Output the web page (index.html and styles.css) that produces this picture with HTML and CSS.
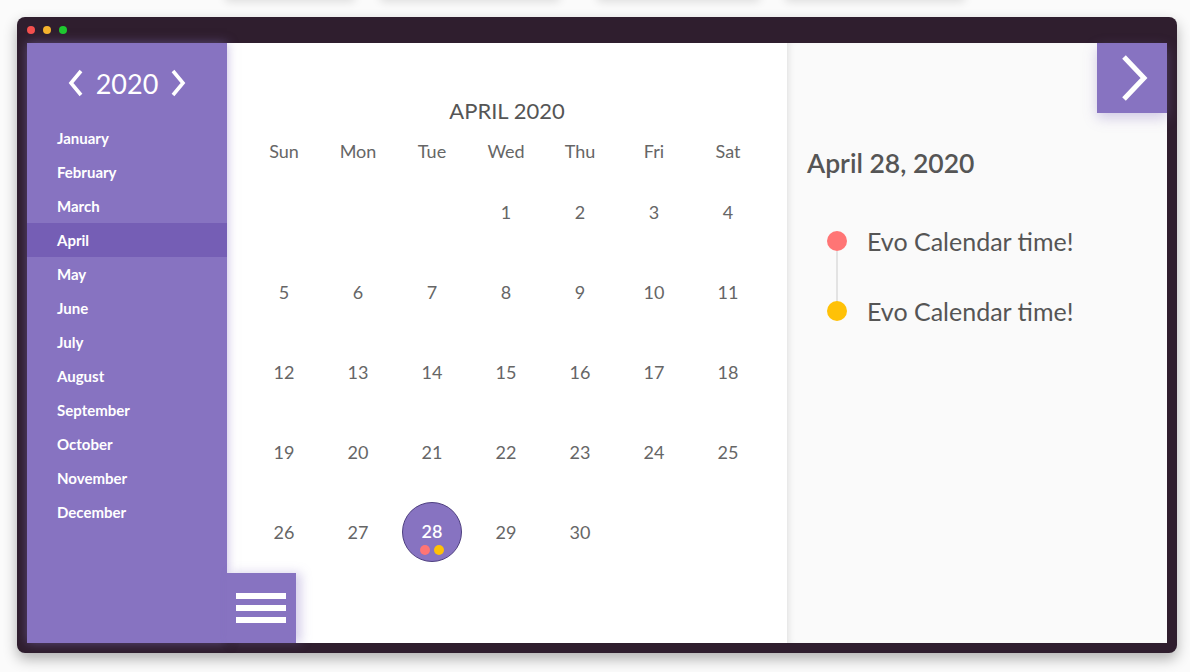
FILE: index.html
```html
<!DOCTYPE html>
<html>
<head>
<meta charset="utf-8">
<link rel="stylesheet" href="styles.css">
</head>
<body>
<div class="ghosts">
  <div class="ghost g1"></div>
  <div class="ghost g2"></div>
  <div class="ghost g3"></div>
  <div class="ghost g4"></div>
</div>
<div class="frame">
  <div class="titlebar">
    <span class="dot red"></span><span class="dot yellow"></span><span class="dot green"></span>
  </div>
  <div class="app">
    <aside class="sidebar">
      <div class="year">
        <svg class="chev" width="18" height="30" viewBox="0 0 18 30"><polyline points="14,3 4,15 14,27" fill="none" stroke="#fff" stroke-width="3.6"/></svg>
        <span class="year-text">2020</span>
        <svg class="chev" width="18" height="30" viewBox="0 0 18 30"><polyline points="4,3 14,15 4,27" fill="none" stroke="#fff" stroke-width="3.6"/></svg>
      </div>
      <ul class="months">
        <li>January</li>
        <li>February</li>
        <li>March</li>
        <li class="active">April</li>
        <li>May</li>
        <li>June</li>
        <li>July</li>
        <li>August</li>
        <li>September</li>
        <li>October</li>
        <li>November</li>
        <li>December</li>
      </ul>
      <div class="toggler">
        <span></span><span></span><span></span>
      </div>
    </aside>
    <main class="calendar">
      <div class="cal-title">APRIL 2020</div>
      <div class="grid">
        <div class="wd">Sun</div><div class="wd">Mon</div><div class="wd">Tue</div><div class="wd">Wed</div><div class="wd">Thu</div><div class="wd">Fri</div><div class="wd">Sat</div>
        <div class="day"></div><div class="day"></div><div class="day"></div>
        <div class="day">1</div><div class="day">2</div><div class="day">3</div><div class="day">4</div>
        <div class="day">5</div><div class="day">6</div><div class="day">7</div><div class="day">8</div><div class="day">9</div><div class="day">10</div><div class="day">11</div>
        <div class="day">12</div><div class="day">13</div><div class="day">14</div><div class="day">15</div><div class="day">16</div><div class="day">17</div><div class="day">18</div>
        <div class="day">19</div><div class="day">20</div><div class="day">21</div><div class="day">22</div><div class="day">23</div><div class="day">24</div><div class="day">25</div>
        <div class="day">26</div><div class="day">27</div>
        <div class="day"><div class="sel"><span class="num">28</span><span class="marks"><i class="m-red"></i><i class="m-yellow"></i></span></div></div>
        <div class="day">29</div><div class="day">30</div>
      </div>
    </main>
    <section class="events">
      <div class="ev-toggle">
        <svg width="34" height="50" viewBox="0 0 34 50"><polyline points="6,4 26,25 6,46" fill="none" stroke="#fff" stroke-width="5"/></svg>
      </div>
      <h2 class="ev-date">April 28, 2020</h2>
      <ul class="ev-list">
        <li><span class="bullet b-red"></span>Evo Calendar time!</li>
        <li><span class="bullet b-yellow"></span>Evo Calendar time!</li>
      </ul>
    </section>
  </div>
</div>
</body>
</html>
```
FILE: styles.css
```css
* { box-sizing: border-box; }
html, body { margin: 0; padding: 0; }
body {
  width: 1190px;
  height: 672px;
  overflow: hidden;
  background: #fbfbfb;
  font-family: "Source Sans Pro", Lato, "Open Sans", sans-serif;
  color: #5a5a5a;
}
.ghosts {
  display: flex;
  height: 0;
  padding-left: 225px;
  gap: 25px;
}
.ghost {
  flex: none;
  height: 40px;
  margin-top: -42px;
  background: #fff;
  box-shadow: 0 4px 10px rgba(0, 0, 0, 0.12);
  border-radius: 4px;
}
.g1 { width: 130px; }
.g2 { width: 180px; }
.g3 { width: 163px; margin-left: 12px; }
.g4 { width: 180px; }
.frame {
  margin: 17px 0 0 17px;
  width: 1160px;
  height: 636px;
  background: #2f1e2e;
  border-radius: 8px;
  padding: 0 10px 10px 10px;
  box-shadow: 0 6px 14px rgba(0, 0, 0, 0.3);
}
.titlebar {
  height: 26px;
  display: flex;
  align-items: center;
  gap: 8px;
}
.dot { width: 8px; height: 8px; border-radius: 50%; display: block; }
.red { background: #f5504e; }
.yellow { background: #f7b32d; }
.green { background: #1fc830; }
.app {
  display: flex;
  height: 600px;
  background: #fff;
}
.sidebar {
  position: relative;
  z-index: 2;
  flex: none;
  width: 200px;
  background: #8773c1;
  color: #fff;
  box-shadow: 0 0 10px rgba(135, 115, 193, 0.5);
}
.year {
  height: 78px;
  display: flex;
  align-items: center;
  justify-content: center;
  gap: 11px;
  padding-top: 2px;
}
.year-text { font-size: 27px; line-height: 1; }
.chev { display: block; }
.months { list-style: none; margin: 0; padding: 0; }
.months li {
  height: 34px;
  line-height: 34px;
  padding-left: 30px;
  font-size: 15px;
  font-weight: 700;
}
.months li.active { background: #755eb5; }
.toggler {
  position: absolute;
  left: 200px;
  bottom: 0;
  width: 69px;
  height: 70px;
  background: #8773c1;
  display: flex;
  flex-direction: column;
  justify-content: center;
  gap: 6px;
  padding-left: 9px;
  box-shadow: 5px 0 10px rgba(135, 115, 193, 0.35);
}
.toggler span { display: block; width: 50px; height: 6px; background: #fff; }
.calendar {
  flex: none;
  width: 560px;
  padding: 48px 20px 0;
  position: relative;
  z-index: 1;
}
.cal-title {
  height: 40px;
  line-height: 40px;
  text-align: center;
  font-size: 22px;
  color: #555;
}
.grid {
  display: grid;
  grid-template-columns: repeat(7, 74px);
  grid-auto-rows: 80px;
  grid-template-rows: 41px;
}
.wd {
  text-align: center;
  font-size: 18px;
  line-height: 40px;
  color: #666;
}
.day {
  display: flex;
  align-items: center;
  justify-content: center;
  font-size: 18px;
  color: #666;
}
.sel {
  position: relative;
  width: 60px;
  height: 60px;
  border-radius: 50%;
  background: #8773c1;
  border: 1px solid #4e3f80;
  color: #fff;
  display: flex;
  align-items: center;
  justify-content: center;
  font-weight: 600;
}
.num { margin-top: -2px; }
.marks {
  position: absolute;
  left: 0;
  right: 0;
  bottom: 6px;
  display: flex;
  justify-content: center;
  gap: 4px;
}
.marks i { display: block; width: 10px; height: 10px; border-radius: 50%; }
.m-red { background: #ff7575; }
.m-yellow { background: #ffc107; }
.events {
  flex: 1;
  position: relative;
  background: #fafafa;
  box-shadow: inset 6px 0 8px -6px rgba(0, 0, 0, 0.15);
  padding: 102px 20px 0;
}
.ev-toggle {
  position: absolute;
  top: 0;
  right: 0;
  width: 70px;
  height: 70px;
  background: #8773c1;
  display: flex;
  align-items: center;
  justify-content: center;
  box-shadow: 0 5px 12px rgba(135, 115, 193, 0.35);
}
.ev-toggle svg { display: block; margin-left: 6px; }
.ev-date {
  margin: 0;
  height: 36px;
  line-height: 36px;
  font-size: 26.5px;
  font-weight: 600;
  color: #555;
}
.ev-list { list-style: none; margin: 25px 0 0; padding: 0 0 0 20px; }
.ev-list li {
  position: relative;
  height: 70px;
  display: flex;
  align-items: center;
  font-size: 25px;
  color: #555;
}
.bullet {
  width: 20px;
  height: 20px;
  border-radius: 50%;
  margin-right: 20px;
  flex: none;
  position: relative;
  z-index: 1;
}
.b-red { background: #ff7575; }
.b-yellow { background: #ffc107; }
.ev-list li:first-child::after {
  content: "";
  position: absolute;
  left: 9px;
  top: 45px;
  width: 2px;
  height: 60px;
  background: #e3e3e3;
}
```
